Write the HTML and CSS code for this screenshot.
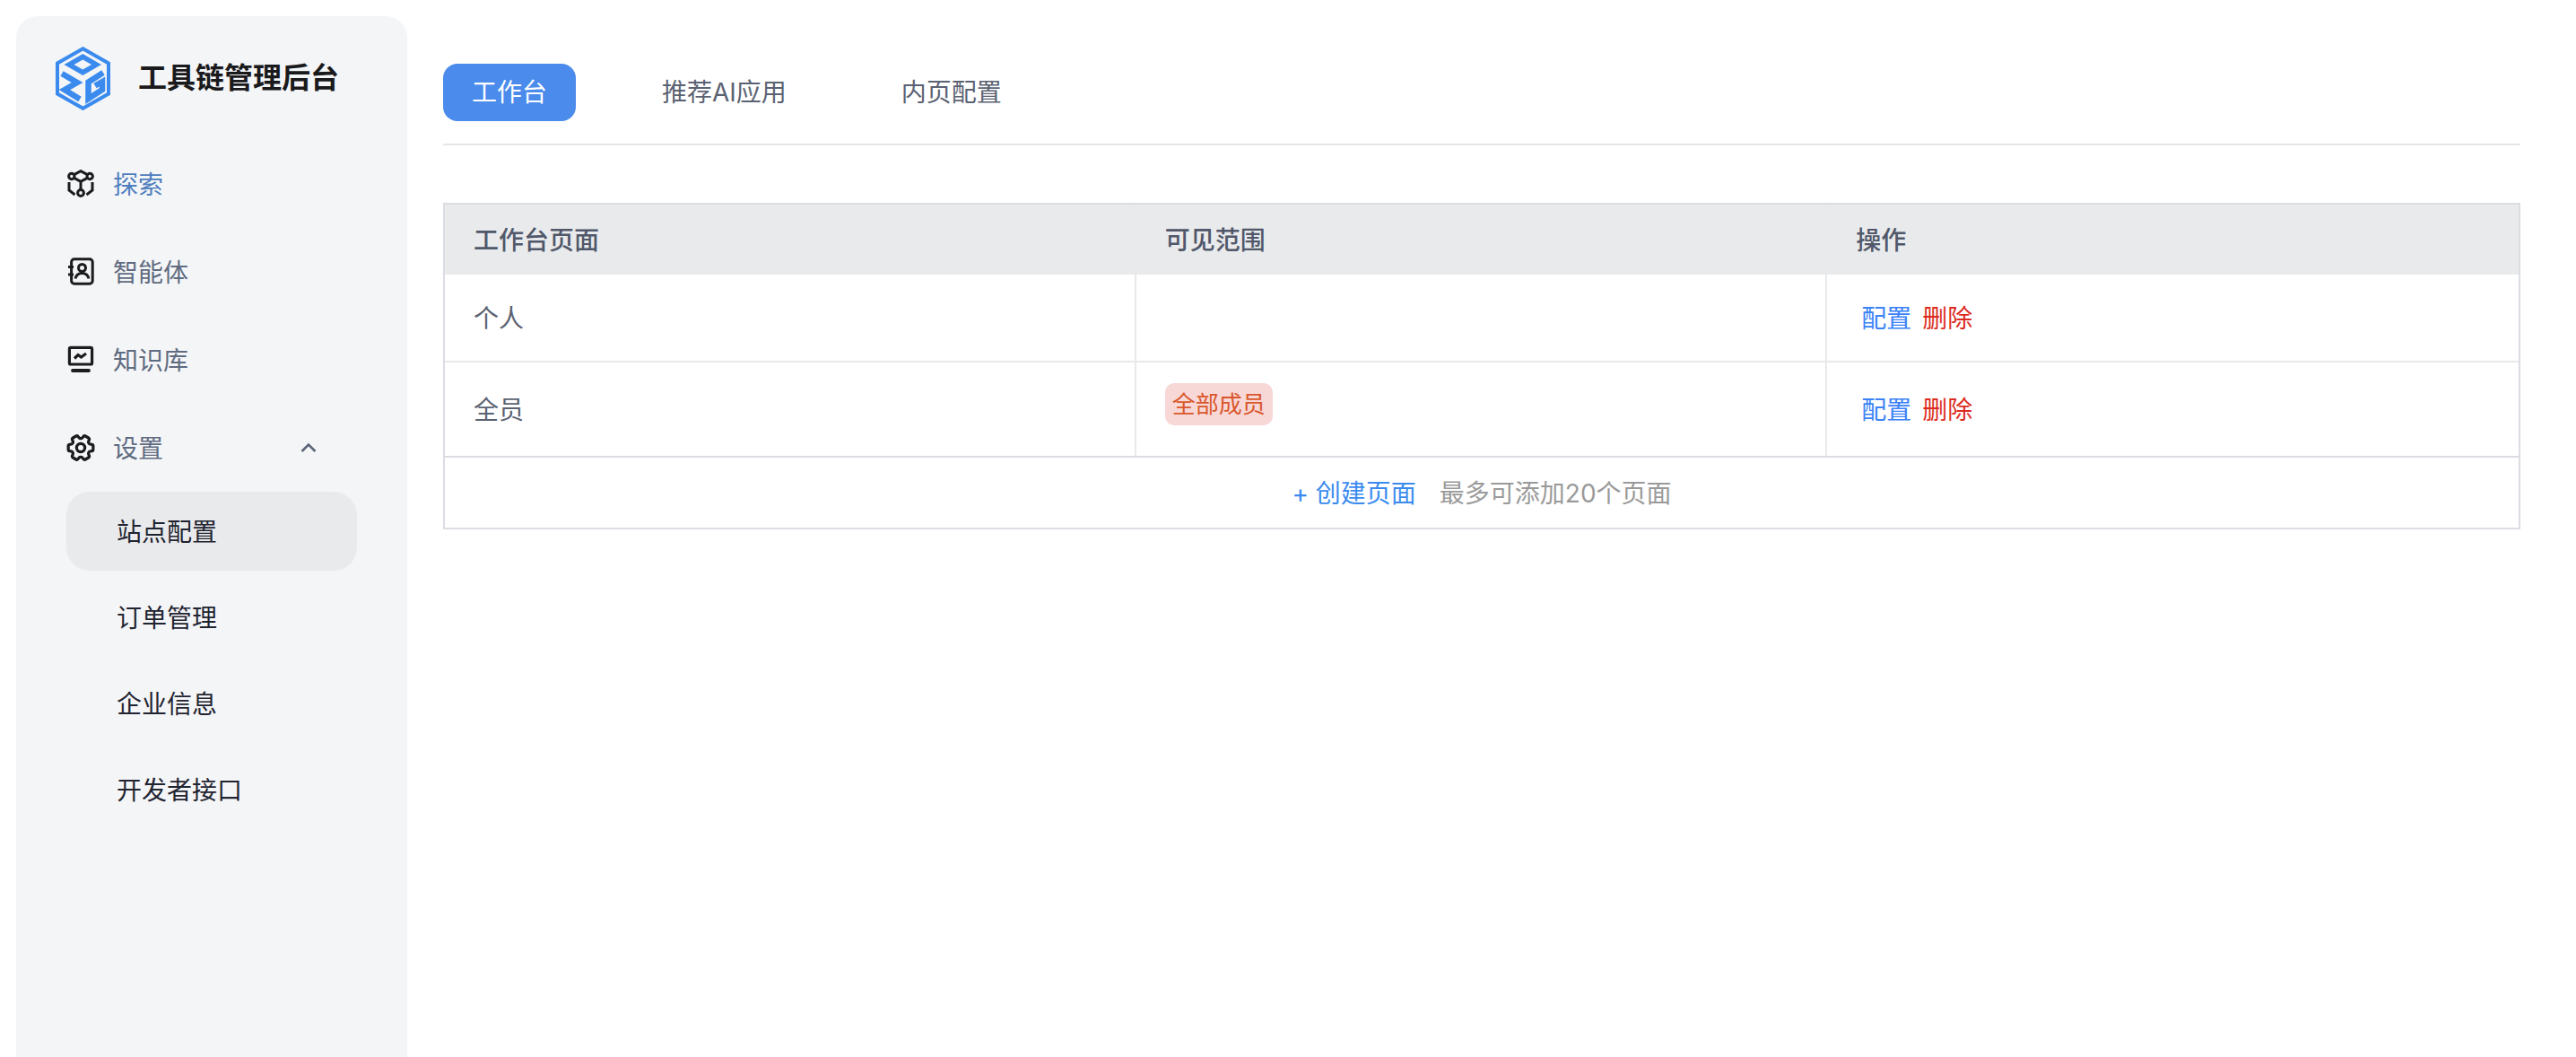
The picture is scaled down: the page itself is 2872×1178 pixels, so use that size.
FILE: index.html
```html
<!DOCTYPE html>
<html lang="zh-CN">
<head>
<meta charset="utf-8">
<title>工具链管理后台</title>
<link rel="stylesheet" href="styles.css">
</head>
<body>
<div class="app">
  <aside class="sidebar">
    <div class="brand">
      <svg class="logo" viewBox="0 0 61 71" fill="none" stroke="#3b8bef">
        <path d="M30.5 2.2 59 18.5v34L30.5 68.8 2 52.5v-34z" stroke-width="4" stroke-linejoin="miter"/>
        <path d="M30.3 8 51 20 30.3 32 9.5 20zM30.3 14.5 20.5 20l9.8 5.5L40 20z" fill="#3b8bef" fill-rule="evenodd" stroke="none"/>
        <path d="M7 30l17 10-14 8 17 10.5" stroke-width="6.5"/>
        <path d="M53 29 36.5 39.5V58L52 48v-9l-8 4.5" stroke-width="6.5"/>
      </svg>
      <span class="brand-name">工具链管理后台</span>
    </div>
    <nav class="nav">
      <div class="nav-item nav-current">
        <svg class="nav-icon" viewBox="0 0 32 32" fill="none" stroke="#1c1c1e" stroke-width="3">
          <circle cx="5.8" cy="7.5" r="3.2"/><circle cx="26.2" cy="7.5" r="3.2"/><circle cx="16" cy="26" r="3.4"/>
          <path d="M8.6 5.6 16 1.6l7.4 4M8.6 9.4 16 13.4l7.4-4M16 13.4v9.2M3 14v9l6.5 5M29 14v9l-6.5 5"/>
        </svg>
        <span class="nav-label">探索</span>
      </div>
      <div class="nav-item">
        <svg class="nav-icon" viewBox="0 0 32 32" fill="none" stroke="#1c1c1e" stroke-width="3">
          <rect x="5.6" y="1.8" width="23.6" height="27.4" rx="3.2"/>
          <circle cx="17.5" cy="11.5" r="4"/><path d="M10 23.5c1-4.4 4-6 7.5-6s6.5 1.6 7.5 6M2 10.5h6M2 19h6"/>
        </svg>
        <span class="nav-label">智能体</span>
      </div>
      <div class="nav-item">
        <svg class="nav-icon" viewBox="0 0 32 32" fill="none" stroke="#1c1c1e" stroke-width="3.2">
          <rect x="3.4" y="2.4" width="25.2" height="18.6" rx="1.6"/>
          <path d="M9 14.5l4-4 3.5 2.6L22 9"/><path d="M7 28h18" stroke-width="3.8" stroke-linecap="round"/>
        </svg>
        <span class="nav-label">知识库</span>
      </div>
      <div class="nav-item">
        <svg class="nav-icon" viewBox="1.6 1.6 20.8 20.8" fill="none" stroke="#1c1c1e" stroke-width="2.1">
          <g transform="rotate(90 12 12)">
            <path d="M9.594 3.94c.09-.542.56-.94 1.11-.94h2.593c.55 0 1.02.398 1.11.94l.213 1.281c.063.374.313.686.645.87.074.04.147.083.22.127.325.196.72.257 1.075.124l1.217-.456a1.125 1.125 0 0 1 1.37.49l1.296 2.247a1.125 1.125 0 0 1-.26 1.431l-1.003.827c-.293.241-.438.613-.43.992a7.723 7.723 0 0 1 0 .255c-.008.378.137.75.43.991l1.004.827c.424.35.534.955.26 1.43l-1.298 2.247a1.125 1.125 0 0 1-1.369.491l-1.217-.456c-.355-.133-.75-.072-1.076.124a6.47 6.47 0 0 1-.22.128c-.331.183-.581.495-.644.869l-.213 1.281c-.09.543-.56.94-1.11.94h-2.594c-.55 0-1.019-.398-1.11-.94l-.213-1.281c-.062-.374-.312-.686-.644-.87a6.52 6.52 0 0 1-.22-.127c-.325-.196-.72-.257-1.076-.124l-1.217.456a1.125 1.125 0 0 1-1.369-.49l-1.297-2.247a1.125 1.125 0 0 1 .26-1.431l1.004-.827c.292-.24.437-.613.43-.991a6.932 6.932 0 0 1 0-.255c.007-.38-.138-.751-.43-.992l-1.004-.827a1.125 1.125 0 0 1-.26-1.43l1.297-2.247a1.125 1.125 0 0 1 1.37-.491l1.216.456c.356.133.751.072 1.076-.124.072-.044.146-.086.22-.128.332-.183.582-.495.644-.869l.214-1.28Z"/>
            <path d="M15 12a3 3 0 1 1-6 0 3 3 0 0 1 6 0Z"/>
          </g>
        </svg>
        <span class="nav-label">设置</span>
        <svg class="chevron" viewBox="0 0 18 12" fill="none" stroke="#5b6478" stroke-width="2.6"><path d="M1.5 10 9 2.5l7.5 7.5"/></svg>
      </div>
      <div class="subnav">
        <div class="sub-item sub-active">站点配置</div>
        <div class="sub-item">订单管理</div>
        <div class="sub-item">企业信息</div>
        <div class="sub-item">开发者接口</div>
      </div>
    </nav>
  </aside>
  <main class="main">
    <div class="tabs">
      <div class="tab tab-active">工作台</div>
      <div class="tab">推荐AI应用</div>
      <div class="tab">内页配置</div>
    </div>
    <div class="table">
      <div class="row row-head">
        <div class="cell">工作台页面</div>
        <div class="cell">可见范围</div>
        <div class="cell">操作</div>
      </div>
      <div class="row row-one">
        <div class="cell">个人</div>
        <div class="cell"></div>
        <div class="cell"><span class="link">配置</span><span class="link link-danger">删除</span></div>
      </div>
      <div class="row row-two">
        <div class="cell">全员</div>
        <div class="cell"><span class="tag">全部成员</span></div>
        <div class="cell"><span class="link">配置</span><span class="link link-danger">删除</span></div>
      </div>
      <div class="table-foot">
        <span class="create">+ 创建页面</span>
        <span class="limit">最多可添加20个页面</span>
      </div>
    </div>
  </main>
</div>
</body>
</html>
```

FILE: styles.css
```css
* { box-sizing: border-box; }
html, body { margin: 0; height: 100%; background: #fff; }
body {
  font-family: Inter, "Noto Sans CJK SC", sans-serif;
  font-size: 28px;
  line-height: 40px;
  overflow: hidden;
}
.app { display: flex; height: 100vh; }
.sidebar {
  flex: 0 0 436px;
  margin: 18px 0 0 18px;
  background: #f4f5f7;
  border-radius: 24px 24px 0 0;
}
.brand {
  display: flex;
  align-items: center;
  gap: 31px;
  height: 138px;
  padding: 0 0 0 44px;
}
.logo { width: 61px; height: 71px; flex: none; }
.brand-name { font-size: 32px; font-weight: 700; color: #1a1a1c; white-space: nowrap; }
.nav { padding: 0 56px; }
.nav-item {
  display: flex;
  align-items: center;
  height: 98px;
  gap: 20px;
  color: #5f6b80;
}
.nav-label { padding-top: 1px; }
.nav-current { color: #4f7dbd; }
.nav-icon { width: 32px; height: 32px; flex: none; }
.chevron { width: 18px; height: 12px; margin-left: auto; margin-right: 45px; }
.subnav { display: flex; flex-direction: column; gap: 8px; }
.sub-item {
  height: 88px;
  padding: 1px 0 0 56px;
  display: flex;
  align-items: center;
  color: #1f2430;
  border-radius: 26px;
}
.sub-active { background: #e9eaec; }
.main { flex: 1; min-width: 0; margin: 0 62px 0 40px; padding-top: 71px; }
.tabs {
  display: flex;
  gap: 64px;
  padding-bottom: 25px;
  border-bottom: 2px solid #e5e6e8;
}
.tab {
  height: 64px;
  padding: 0 32px;
  display: flex;
  align-items: center;
  color: #5b6272;
  border-radius: 16px;
}
.tab-active { background: #4a8bec; color: #fff; }
.table { margin-top: 64px; border: 2px solid #dcdde2; color: #5b6272; }
.row { display: grid; grid-template-columns: repeat(3, 1fr); }
.cell {
  padding: 1px 32px 0;
  display: flex;
  align-items: center;
  border-right: 2px solid #e8e9eb;
}
.cell:last-child { border-right: 0; }
.row-head { height: 78px; background: #e9eaec; font-weight: 500; color: #50586a; }
.row-one { height: 98px; border-bottom: 2px solid #e8e9eb; }
.row-two { height: 106px; border-bottom: 2px solid #dcdde2; }
.link { padding: 0 6px; color: #3b82f6; }
.link-danger { color: #dc2c22; }
.tag {
  height: 47px;
  margin-top: -12px;
  padding: 0 8px;
  display: flex;
  align-items: center;
  font-size: 26px;
  color: #d9582b;
  background: #f8d7d7;
  border-radius: 10px;
}
.table-foot {
  height: 78px;
  padding-top: 1px;
  display: flex;
  align-items: center;
  justify-content: center;
  gap: 26px;
}
.create { color: #3b8bef; }
.limit { color: #9a9a9a; }
```
